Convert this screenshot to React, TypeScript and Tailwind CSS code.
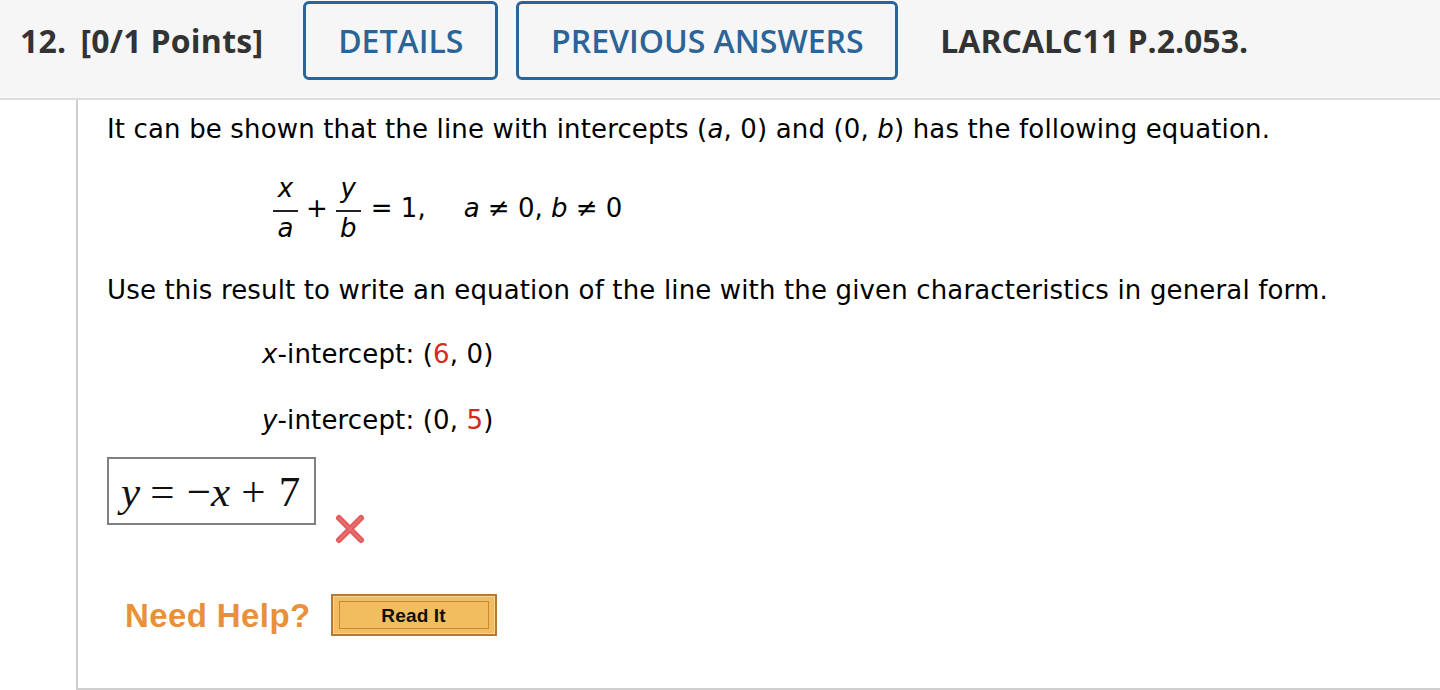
import React from "react";

const verdana = { fontFamily: '"DejaVu Sans", Verdana, sans-serif' };

function Frac({ num, den }: { num: string; den: string }) {
  return (
    <span className="inline-flex flex-col items-center mx-[1px]">
      <span className="italic leading-none pb-[9px]">{num}</span>
      <span className="block w-[25px] h-[2px] bg-[#222]" />
      <span className="italic leading-none pt-[3px]">{den}</span>
    </span>
  );
}

function WrongMark() {
  return (
    <svg width="32" height="32" viewBox="0 0 32 32" className="block">
      <path d="M5 5 L27 27 M27 5 L5 27" stroke="#e25a5a" strokeWidth="6" strokeLinecap="round" />
      <path d="M5 5 L27 27 M27 5 L5 27" stroke="#f08a8a" strokeWidth="2" strokeLinecap="round" opacity="0.45" />
    </svg>
  );
}

export default function App() {
  return (
    <div className="w-full h-[690px] bg-white overflow-hidden">
      {/* question header */}
      <header
        className="h-[100px] bg-[#f6f6f6] border-b-2 border-[#dedede] flex items-start pt-[1px] pl-[20px] text-[#333]"
        style={{ fontFamily: '"Open Sans", sans-serif' }}
      >
        <div className="h-[79px] flex items-center text-[32px] font-bold tracking-[0.25px]">
          <span>12.</span>
          <span className="ml-[14px]">[0/1 Points]</span>
        </div>
        <button className="ml-[40px] w-[195px] h-[79px] border-[3px] border-[#2b6496] rounded-[6px] text-[#2b6496] text-[32px] font-semibold">
          DETAILS
        </button>
        <button className="ml-[18px] w-[382px] h-[79px] border-[3px] border-[#2b6496] rounded-[6px] text-[#2b6496] text-[32px] font-semibold">
          PREVIOUS ANSWERS
        </button>
        <div className="ml-[42px] h-[79px] flex items-center text-[32px] font-bold">
          LARCALC11 P.2.053.
        </div>
      </header>

      {/* question body */}
      <main
        className="ml-[76px] h-[590px] border-l-2 border-b-2 border-[#cfcfcf] pl-[29px] text-[26px] tracking-[0.15px] text-black"
        style={verdana}
      >
        <p className="pt-[11px] leading-[36px]">
          It can be shown that the line with intercepts (<i>a</i>, 0) and (0, <i>b</i>) has the following equation.
        </p>

        <div className="mt-[28px] ml-[165px] flex items-center text-[26px] tracking-normal">
          <Frac num="x" den="a" />
          <span className="mx-[7px] leading-none">+</span>
          <Frac num="y" den="b" />
          <span className="ml-[9px] leading-none">= 1,</span>
          <span className="ml-[38px] leading-none">
            <i>a</i> ≠ 0, <i>b</i> ≠ 0
          </span>
        </div>

        <p className="mt-[31px] leading-[36px]">
          Use this result to write an equation of the line with the given characteristics in general form.
        </p>

        <div className="ml-[155px]">
          <p className="mt-[28px] leading-[36px]">
            <i>x</i>-intercept: (<span className="text-[#d42a1f]">6</span>, 0)
          </p>
          <p className="mt-[30px] leading-[36px]">
            <i>y</i>-intercept: (0, <span className="text-[#d42a1f]">5</span>)
          </p>
        </div>

        <div className="mt-[19px] flex items-start">
          <div
            className="w-[209px] h-[68px] border-2 border-[#808080] flex items-center pl-[12px] text-[43px] leading-none text-[#111]"
            style={{ fontFamily: '"Liberation Serif", "Times New Roman", serif' }}
          >
            <i>y</i>
            <span className="ml-[10px]">=</span>
            <span className="ml-[12px]">−</span>
            <i>x</i>
            <span className="ml-[11px]">+</span>
            <span className="ml-[13px]">7</span>
          </div>
          <div className="ml-[18px] mt-[56px]">
            <WrongMark />
          </div>
        </div>

        <div className="mt-[49px] ml-[18px] flex items-center" style={{ fontFamily: '"Liberation Sans", Arial, sans-serif' }}>
          <span className="text-[33px] leading-none font-bold text-[#e8913a] tracking-[0.4px]">Need Help?</span>
          <button className="ml-[20px] w-[166px] h-[42px] bg-[#f2bd5e] border-2 border-[#b27a36] px-[6px] py-[5px] shadow-[inset_0_0_0_1px_#f8d593]">
            <span className="flex items-center justify-center h-full border border-[#c8883a] text-[19px] font-bold text-[#111] leading-none">
              Read It
            </span>
          </button>
        </div>
      </main>
    </div>
  );
}
